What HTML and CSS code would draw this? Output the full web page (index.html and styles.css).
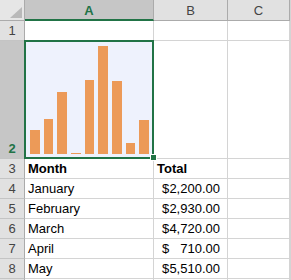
FILE: index.html
```html
<!DOCTYPE html>
<html lang="en">
<head>
    <meta charset="UTF-8">
    <title>Sheet1</title>
    <link rel="stylesheet" href="styles.css">
</head>
<body>

<div class="sheet">
    <!-- column headers -->
    <div class="corner"><span class="tri"></span></div>
    <div class="hd sel">A</div>
    <div class="hd">B</div>
    <div class="hd">C</div>

    <!-- row 1 -->
    <div class="rh">1</div>
    <div class="c"></div>
    <div class="c"></div>
    <div class="c"></div>

    <!-- row 2: chart -->
    <div class="rh sel">2</div>
    <div class="c chart-cell">
        <svg class="chart" width="128" height="117" viewBox="0 0 128 117">
            <rect x="0" y="0" width="128" height="117" fill="#eef2fd"/>
            <g fill="#ec9a58">
                <rect x="5" y="89" width="10" height="24"/>
                <rect x="19" y="78" width="9" height="35"/>
                <rect x="32" y="51" width="10" height="62"/>
                <rect x="46" y="112" width="10" height="1"/>
                <rect x="60" y="39" width="9" height="74"/>
                <rect x="73" y="5" width="10" height="108"/>
                <rect x="87" y="40" width="10" height="73"/>
                <rect x="101" y="102" width="9" height="11"/>
                <rect x="114" y="79" width="10" height="34"/>
            </g>
        </svg>
        <div class="selection"></div>
        <div class="handle"></div>
    </div>
    <div class="c"></div>
    <div class="c"></div>

    <!-- row 3 -->
    <div class="rh">3</div>
    <div class="c bold">Month</div>
    <div class="c bold">Total</div>
    <div class="c"></div>

    <div class="rh">4</div>
    <div class="c">January</div>
    <div class="c acct"><span>$</span><span>2,200.00</span></div>
    <div class="c"></div>

    <div class="rh">5</div>
    <div class="c">February</div>
    <div class="c acct"><span>$</span><span>2,930.00</span></div>
    <div class="c"></div>

    <div class="rh">6</div>
    <div class="c">March</div>
    <div class="c acct"><span>$</span><span>4,720.00</span></div>
    <div class="c"></div>

    <div class="rh">7</div>
    <div class="c">April</div>
    <div class="c acct"><span>$</span><span>710.00</span></div>
    <div class="c"></div>

    <div class="rh">8</div>
    <div class="c">May</div>
    <div class="c acct"><span>$</span><span>5,510.00</span></div>
    <div class="c"></div>

    <!-- row 9, only its top edge shows -->
    <div class="rh"></div>
    <div class="c"></div>
    <div class="c"></div>
    <div class="c"></div>
</div>

</body>
</html>
```

FILE: styles.css
```css
html, body { margin: 0; height: 280px; overflow: hidden; background: #d4d4d4; }
body { font-family: "Liberation Sans", Arial, sans-serif; font-size: 13px; color: #000; }
.sheet { display: grid; grid-template-columns: 25px 129px 74px 62px; grid-template-rows: 21px 20px 118px repeat(7, 20px); background: #fff; width: 290px; }
.sheet > div { box-sizing: border-box; }

.corner { background: #e6e6e6; border-right: 1px solid #ababab; border-bottom: 1px solid #ababab; display: flex; align-items: flex-end; justify-content: flex-end; padding: 0 2px 2px 0; }
.tri { width: 0; height: 0; border-left: 12px solid transparent; border-bottom: 11px solid #b9b9b9; }

.hd { background: #e1e1e1; color: #444; text-align: center; line-height: 21px; border-right: 1px solid #ababab; border-bottom: 1px solid #ababab; }
.hd.sel { background: #c6c6c6; color: #217346; font-weight: bold; border-bottom: 2px solid #217346; }

.rh { background: #e1e1e1; color: #444; text-align: center; line-height: 20px; border-right: 1px solid #ababab; border-bottom: 1px solid #c4c4c4; }
.rh.sel { background: #c6c6c6; color: #217346; font-weight: bold; display: flex; align-items: flex-end; justify-content: center; line-height: 18px; }

.c { border-right: 1px solid #d4d4d4; border-bottom: 1px solid #d4d4d4; padding: 0 3px; line-height: 20px; white-space: nowrap; }
.bold { font-weight: bold; }
.acct { display: flex; justify-content: space-between; padding: 0 7px 0 8px; }

.chart-cell { position: relative; padding: 0; }
.chart { display: block; }
.selection { position: absolute; left: -1px; top: -1px; width: 130px; height: 119px; box-sizing: border-box; border: 2px solid #217346; }
.handle { position: absolute; left: 125px; top: 113px; width: 5px; height: 5px; background: #217346; border: 1px solid #fff; }
```
